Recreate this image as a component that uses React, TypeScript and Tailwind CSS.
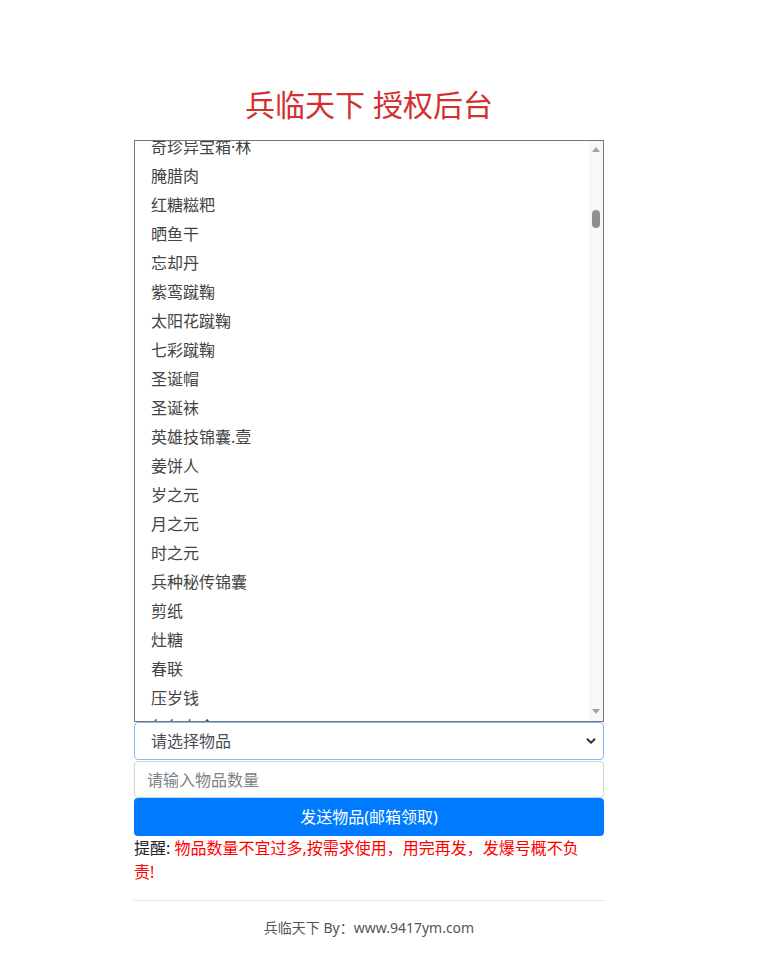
import { ChevronDown } from 'lucide-react';

const items = [
  '奇珍异宝箱·林',
  '腌腊肉',
  '红糖糍粑',
  '晒鱼干',
  '忘却丹',
  '紫鸾蹴鞠',
  '太阳花蹴鞠',
  '七彩蹴鞠',
  '圣诞帽',
  '圣诞袜',
  '英雄技锦囊.壹',
  '姜饼人',
  '岁之元',
  '月之元',
  '时之元',
  '兵种秘传锦囊',
  '剪纸',
  '灶糖',
  '春联',
  '压岁钱',
  '年年有余',
];

export default function App() {
  return (
    <div className="min-h-screen bg-white font-['Noto_Sans','Noto_Sans_CJK_SC',sans-serif] text-[#212529]">
      <div className="ml-[134px] w-[470px] pt-[85px]">
        {/* Title */}
        <h1 className="mb-[15px] text-center text-[30px] leading-[40px] text-[#d2302f]">兵临天下 授权后台</h1>

        {/* Open list box */}
        <div className="flex h-[582px] border border-[#767676] bg-white">
          <div className="flex-1 overflow-hidden">
            <div className="-mt-[8px]">
              {items.map((name) => (
                <div key={name} className="h-[29px] pl-[16px] text-[16px] leading-[29px] text-[#444]">
                  {name}
                </div>
              ))}
            </div>
          </div>
          {/* Scrollbar */}
          <div className="flex w-[14px] flex-col items-center bg-[#f8f8f8]">
            <div className="mt-[6px] h-0 w-0 border-x-[4px] border-b-[5px] border-x-transparent border-b-[#a3a3a3]" />
            <div className="mt-[58px] h-[18px] w-[8px] rounded-full bg-[#8f8f8f]" />
            <div className="flex-1" />
            <div className="mb-[7px] h-0 w-0 border-x-[4px] border-t-[5px] border-x-transparent border-t-[#a3a3a3]" />
          </div>
        </div>

        {/* Select */}
        <div className="flex h-[38px] items-center justify-between rounded-[4px] border border-[#80bdff] pl-[16px] pr-[5px] text-[16px] text-[#495057]">
          <span>请选择物品</span>
          <ChevronDown className="h-[14px] w-[14px] text-[#343a40]" strokeWidth={3.5} />
        </div>

        {/* Quantity input */}
        <div className="mt-[1px] flex h-[37px] items-center rounded-[4px] border border-[#ced4da] pl-[12px] text-[16px] text-[#7b8389]">
          请输入物品数量
        </div>

        {/* Send button */}
        <button className="block h-[38px] w-full rounded-[4px] bg-[#007bff] text-[16px] text-white">
          发送物品(邮箱领取)
        </button>

        {/* Warning */}
        <p className="pr-[20px] text-[16px] leading-[24px]">
          <span className="text-[#212529]">提醒: </span>
          <span className="text-[#ff0000]">物品数量不宜过多,按需求使用，用完再发，发爆号概不负责!</span>
        </p>

        <hr className="mt-[16px] border-t border-[#e6e6e6]" />

        {/* Footer */}
        <div className="pt-[16px] text-center text-[14px] leading-[21px] text-[#555]">兵临天下 By：www.9417ym.com</div>
      </div>
    </div>
  );
}
